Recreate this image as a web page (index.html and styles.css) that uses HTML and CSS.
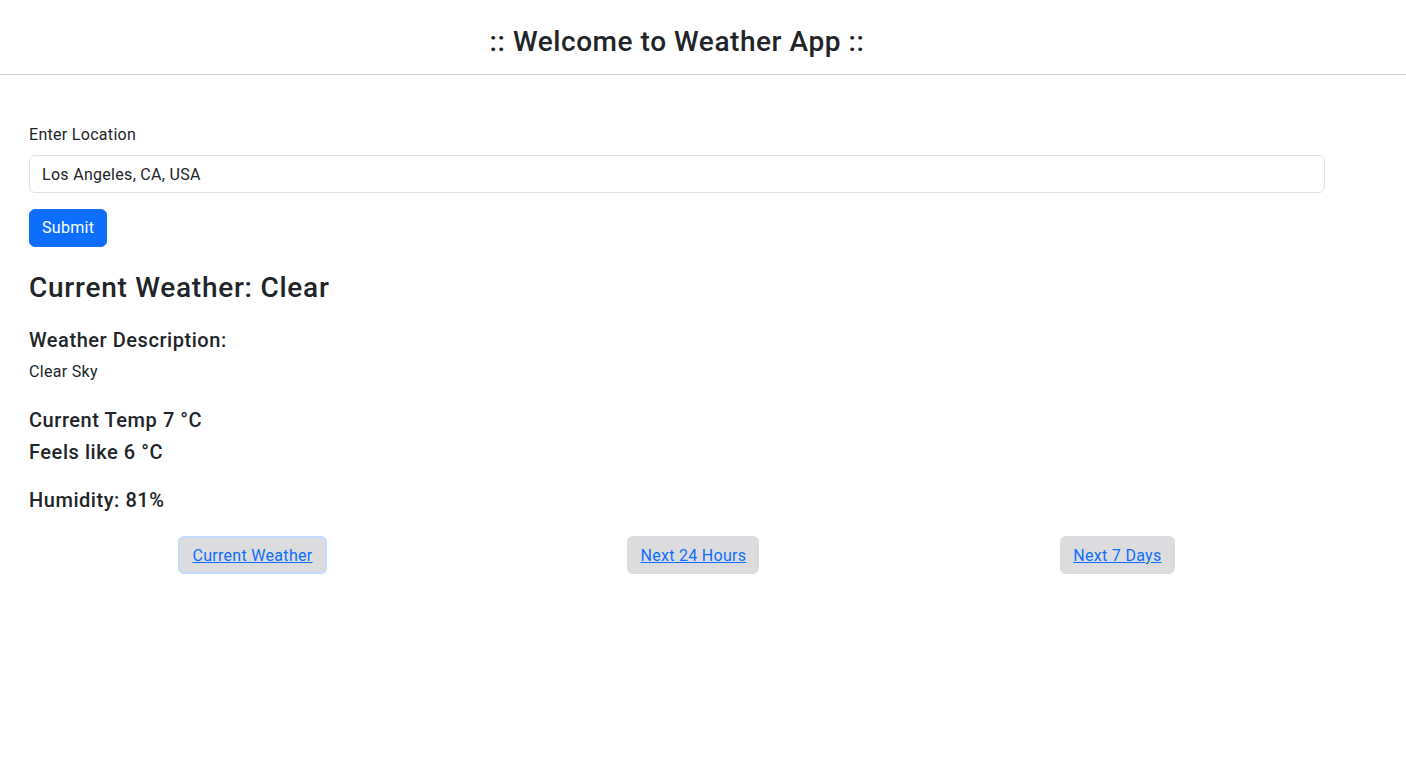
FILE: index.html
```html
<!DOCTYPE html>
<html lang="en">
<head>
<meta charset="utf-8">
<title>Weather App</title>
<link rel="stylesheet" href="styles.css">
</head>
<body>
<header class="app-header">
  <div class="wrap">
    <h3 class="app-title">:: Welcome to Weather App ::</h3>
  </div>
</header>
<main class="wrap main">
  <form class="loc-form">
    <label class="form-label" for="loc">Enter Location</label>
    <input class="form-control" id="loc" type="text" value="Los Angeles, CA, USA">
    <button class="btn-submit" type="button">Submit</button>
  </form>
  <section class="weather">
    <h3 class="weather-title">Current Weather: Clear</h3>
    <h5 class="h5 desc-title">Weather Description:</h5>
    <p class="desc">Clear Sky</p>
    <h5 class="h5 temp">Current Temp 7 °C</h5>
    <h5 class="h5 feels">Feels like 6 °C</h5>
    <h5 class="h5 humid">Humidity: 81%</h5>
  </section>
  <nav class="tabs">
    <a class="tab tab-focus" href="#">Current Weather</a>
    <a class="tab" href="#">Next 24 Hours</a>
    <a class="tab" href="#">Next 7 Days</a>
  </nav>
</main>
</body>
</html>
```
FILE: styles.css
```css
* { box-sizing: border-box; }
html, body { margin: 0; padding: 0; }
body {
  font-family: Roboto, "Liberation Sans", sans-serif;
  font-size: 16px;
  line-height: 1.5;
  letter-spacing: 0.3px;
  color: #212529;
  background: #fff;
}
.wrap {
  width: 1296px;
  margin-left: 29px;
}
.app-header {
  border-bottom: 1px solid #cccccc;
  height: 75px;
  padding-top: 25px;
}
.app-title {
  margin: 0;
  text-align: center;
  font-size: 28px;
  font-weight: 500;
  line-height: 34px;
  letter-spacing: 0.55px;
}
.main { padding-top: 48px; }
.loc-form { display: flex; flex-direction: column; align-items: flex-start; }
.form-label { display: block; margin-bottom: 8px; line-height: 24px; }
.form-control {
  width: 100%;
  height: 38px;
  padding: 6px 12px;
  font: inherit;
  letter-spacing: inherit;
  color: #212529;
  border: 1px solid #dee2e6;
  border-radius: 6px;
  outline: none;
}
.btn-submit {
  margin-top: 16px;
  height: 38px;
  padding: 6px 12px;
  font: inherit;
  letter-spacing: inherit;
  color: #fff;
  background: #0d6efd;
  border: 1px solid #0d6efd;
  border-radius: 6px;
}
.weather { padding-top: 24px; }
.weather-title {
  margin: 0 0 23px;
  font-size: 28px;
  font-weight: 500;
  line-height: 34px;
  letter-spacing: 0.75px;
}
.h5 { margin: 0; font-size: 20px; font-weight: 500; line-height: 24px; letter-spacing: 0.55px; }
.desc-title { margin-bottom: 8px; }
.desc { margin: 0 0 24px; }
.temp { margin-bottom: 8px; }
.feels { margin-bottom: 24px; }
.humid { margin-bottom: 24px; }
.tabs { display: flex; justify-content: space-around; }
.tab {
  display: block;
  height: 38px;
  padding: 6px 12px;
  line-height: 26px;
  background: #dcdcde;
  border: 1px solid #dcdcde;
  border-radius: 6px;
  color: #0d6efd;
  text-decoration: underline;
}
.tab-focus {
  border: 2px solid #c2dbfe;
  padding: 5px 12px;
  margin-left: -1px;
}
```
